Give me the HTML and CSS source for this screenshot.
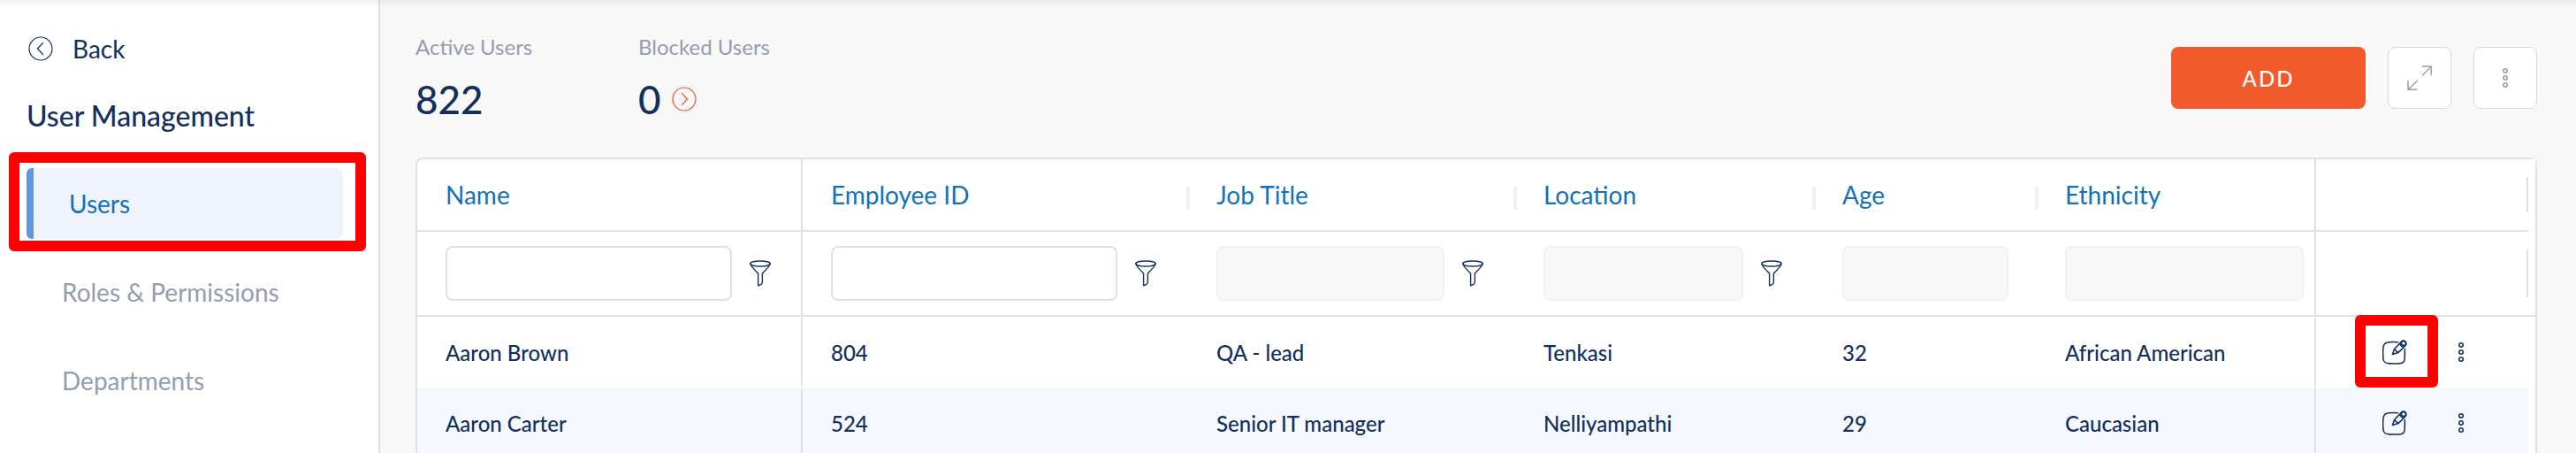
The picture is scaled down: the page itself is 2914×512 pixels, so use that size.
FILE: index.html
```html
<!DOCTYPE html>
<html lang="en">
<head>
    <meta charset="UTF-8">
    <meta name="viewport" content="width=device-width, initial-scale=1.0">
    <title>User Management</title>
    <link rel="stylesheet" href="styles.css">
</head>
<body>

<!-- shared icons -->
<svg class="sprite" aria-hidden="true">
    <symbol id="icon-filter" viewBox="0 0 24 30">
        <ellipse cx="12" cy="4" rx="11.2" ry="3"/>
        <path d="M.8 4C1 6.500 4 9.500 9.600 15v13.800c2.800-.6 4.800-2 4.800-4.200V15C20 9.500 23 6.500 23.200 4"/>
    </symbol>
    <symbol id="icon-edit" viewBox="0 0 28 28">
        <path d="M17.500 2.800C6 2 1 2.500 .8 10c-.3 5-.3 8.500.2 12 .6 4 3 4.700 7 4.900 4 .2 8 .2 12-.1 3.500-.3 5-2 5.200-5.500.2-4 .2-7 .1-10.800"/>
        <path d="M11.500 16.500l2-6L21.300 2.400a3.100 3.100 0 0 1 4.600 4.300L17.800 14.600zM13.500 10.500l4.300 4.100M20 3.800c.2 2.500 1.800 4.200 4.300 4.500"/>
        <circle cx="24" cy="4" r="2.600"/>
    </symbol>
    <symbol id="icon-dots" viewBox="0 0 8 24">
        <circle cx="4" cy="4" r="2.200"/>
        <circle cx="4" cy="12" r="2.200"/>
        <circle cx="4" cy="20" r="2.200"/>
    </symbol>
</svg>

<div class="page">
    <aside class="sidebar">
        <a href="#" class="back">
            <svg class="icon-circle" viewBox="0 0 28 28"><circle cx="14" cy="14" r="13"/><path d="M16.500 7.500L10.500 14l6 6.500"/></svg>
            Back
        </a>
        <h1 class="title">User Management</h1>
        <nav class="menu">
            <a href="#" class="menu-item active">Users<span class="marker marker-menu"></span></a>
            <a href="#" class="menu-item">Roles &amp; Permissions</a>
            <a href="#" class="menu-item">Departments</a>
        </nav>
    </aside>

    <main class="content">
        <header class="toolbar">
            <div class="stat">
                <div class="stat-label">Active Users</div>
                <div class="stat-value">822</div>
            </div>
            <div class="stat">
                <div class="stat-label">Blocked Users</div>
                <div class="stat-value">0
                    <a href="#" class="stat-link" aria-label="Show blocked users">
                        <svg class="icon-circle" viewBox="0 0 28 28"><circle cx="14" cy="14" r="13"/><path d="M11.500 7.500L17.500 14l-6 6.500"/></svg>
                    </a>
                </div>
            </div>
            <div class="actions">
                <button type="button" class="btn-add">ADD</button>
                <button type="button" class="btn-square" aria-label="Expand">
                    <svg class="icon-expand" viewBox="0 0 28 28"><path d="M17.500 11L27 1.500M17.500 1H27.200V10.500M11 17.500L1.500 27M1 17.500V27.200H10.500"/></svg>
                </button>
                <button type="button" class="btn-square" aria-label="More">
                    <svg class="icon-dots"><use href="#icon-dots"/></svg>
                </button>
            </div>
        </header>

        <div class="grid">
            <table>
                <colgroup>
                    <col class="col-name">
                    <col class="col-id">
                    <col class="col-job">
                    <col class="col-location">
                    <col class="col-age">
                    <col>
                    <col class="col-actions">
                    <col class="col-gutter">
                </colgroup>
                <thead>
                    <tr class="heads">
                        <th class="pin-left">Name</th>
                        <th class="resizable">Employee ID</th>
                        <th class="resizable">Job Title</th>
                        <th class="resizable">Location</th>
                        <th class="resizable">Age</th>
                        <th>Ethnicity</th>
                        <th class="pin-right"></th>
                        <th class="gutter"></th>
                    </tr>
                    <tr class="filters">
                        <td class="pin-left"><div class="filter"><input type="text" aria-label="Filter by name"><button type="button" aria-label="Name filter"><svg><use href="#icon-filter"/></svg></button></div></td>
                        <td><div class="filter"><input type="text" aria-label="Filter by employee ID"><button type="button" aria-label="Employee ID filter"><svg><use href="#icon-filter"/></svg></button></div></td>
                        <td><div class="filter"><input type="text" aria-label="Filter by job title" disabled><button type="button" aria-label="Job title filter"><svg><use href="#icon-filter"/></svg></button></div></td>
                        <td><div class="filter"><input type="text" aria-label="Filter by location" disabled><button type="button" aria-label="Location filter"><svg><use href="#icon-filter"/></svg></button></div></td>
                        <td class="plain"><div class="filter"><input type="text" aria-label="Filter by age" disabled></div></td>
                        <td class="last"><div class="filter"><input type="text" aria-label="Filter by ethnicity" disabled></div></td>
                        <td class="pin-right"></td>
                        <td class="gutter"></td>
                    </tr>
                </thead>
                <tbody>
                    <tr>
                        <td class="pin-left">Aaron Brown</td>
                        <td>804</td>
                        <td>QA - lead</td>
                        <td>Tenkasi</td>
                        <td>32</td>
                        <td>African American</td>
                        <td class="pin-right">
                            <div class="row-actions">
                                <button type="button" class="edit" aria-label="Edit Aaron Brown"><svg class="icon-edit"><use href="#icon-edit"/></svg><span class="marker marker-edit"></span></button>
                                <button type="button" aria-label="More for Aaron Brown"><svg class="icon-dots"><use href="#icon-dots"/></svg></button>
                            </div>
                        </td>
                        <td class="gutter"></td>
                    </tr>
                    <tr>
                        <td class="pin-left">Aaron Carter</td>
                        <td>524</td>
                        <td>Senior IT manager</td>
                        <td>Nelliyampathi</td>
                        <td>29</td>
                        <td>Caucasian</td>
                        <td class="pin-right">
                            <div class="row-actions">
                                <button type="button" class="edit" aria-label="Edit Aaron Carter"><svg class="icon-edit"><use href="#icon-edit"/></svg></button>
                                <button type="button" aria-label="More for Aaron Carter"><svg class="icon-dots"><use href="#icon-dots"/></svg></button>
                            </div>
                        </td>
                        <td class="gutter"></td>
                    </tr>
                </tbody>
            </table>
        </div>
    </main>
</div>

</body>
</html>
```
FILE: styles.css
```css
* { box-sizing: border-box; }
body { margin: 0; font-family: Lato, "Open Sans", sans-serif; font-size: 24px; color: #132f5e; background: #f8f8f8; }
a { color: inherit; text-decoration: none; }
button { padding: 0; border: 0; background: none; color: inherit; font-family: inherit; cursor: pointer; }
svg { display: block; fill: none; stroke: currentColor; stroke-width: 1.4; stroke-linecap: round; stroke-linejoin: round; }
.sprite { position: absolute; width: 0; height: 0; }

.page { position: relative; display: flex; height: 100vh; overflow: hidden; }
.page::before { content: ""; position: absolute; top: 0; left: 0; right: 0; height: 8px; background: linear-gradient(rgba(0, 0, 0, 0.06), rgba(0, 0, 0, 0)); z-index: 1; }

/* sidebar */
.sidebar { flex: none; width: 430px; padding: 36px 40px 0 30px; background: #fff; border-right: 2px solid #e1e1e1; }
.back { display: flex; align-items: center; gap: 22px; padding-left: 2px; font-size: 28px; line-height: 38px; }
.icon-circle { width: 28px; height: 28px; stroke-width: 1.2; }
.title { margin: 38px 0 40px; font-size: 32px; font-weight: 500; line-height: 38px; }
.menu { display: flex; flex-direction: column; gap: 20px; }
.menu-item { position: relative; padding-left: 40px; font-size: 28px; line-height: 80px; color: #939db2; }
.menu-item.active { color: #1171bb; background: #eff4fc; border-left: 8px solid #6199d8; border-radius: 6px; }

/* red highlight frames */
.marker { position: absolute; border: 12px solid #f00; border-radius: 6px; pointer-events: none; }
.marker-menu { top: -18px; right: -26px; bottom: -14px; left: -28px; }
.marker-edit { top: -28px; right: -35px; bottom: -26px; left: -31px; }

/* top of the page */
.content { flex: 1; min-width: 0; padding: 37px 44px 0 40px; }
.toolbar { display: flex; align-items: center; margin-bottom: 39px; }
.stat { width: 252px; }
.stat-label { margin-bottom: 16px; line-height: 32px; color: #939db2; }
.stat-value { display: flex; align-items: center; gap: 12px; font-size: 44px; font-weight: 500; line-height: 54px; }
.stat-link { color: #f15b2b; }
.actions { display: flex; gap: 25px; margin-left: auto; }
.btn-add { width: 220px; height: 70px; border-radius: 8px; background: #f15b2b; color: #fff; font-size: 24px; font-weight: 500; letter-spacing: 2px; }
.btn-square { display: flex; align-items: center; justify-content: center; width: 72px; height: 70px; background: #fff; border: 1px solid #d9d9d9; border-radius: 8px; color: #939db2; }
.icon-expand { width: 28px; height: 28px; }
.icon-dots { width: 8px; height: 24px; stroke-width: 1.6; }

/* users table */
.grid { background: #fff; border: 2px solid #e1e1e1; border-radius: 8px; }
table { width: 100%; table-layout: fixed; border-collapse: separate; border-spacing: 0; }
.col-name, .col-id { width: 436px; }
.col-job { width: 370px; }
.col-location { width: 338px; }
.col-age { width: 252px; }
.col-actions { width: 242px; }
.col-gutter { width: 8px; }
th, td { position: relative; padding: 0 32px; text-align: left; white-space: nowrap; }
th { height: 82px; border-bottom: 2px solid #e1e1e1; font-size: 28px; font-weight: 400; color: #1171bb; }
.resizable::after { content: ""; position: absolute; top: 31px; right: -2px; width: 4px; height: 26px; background: #f0f0f0; z-index: 1; }
.pin-left { border-right: 2px solid #e1e1e1; }
.pin-right { border-left: 2px solid #e1e1e1; }
.heads .pin-right::after, .filters .pin-right::after { content: ""; position: absolute; top: 20px; bottom: 20px; right: 0; width: 2px; background: #e1e1e1; }
.heads .gutter { border-bottom: 0; }
.filters td { padding: 16px 36px 16px 32px; border-bottom: 2px solid #e1e1e1; }
.filters .pin-left { padding-right: 34px; }
.filters .plain { padding-right: 32px; }
.filters .last { padding-right: 12px; }
.filter { display: flex; align-items: center; gap: 20px; }
.filter input { flex: 1; min-width: 0; height: 62px; padding: 0 16px; border: 2px solid #e1e1e1; border-radius: 8px; background: #fff; font: inherit; color: inherit; }
.filter input:disabled { background: #f9f9f9; border-color: #f2f2f2; }
.filter svg { width: 24px; height: 30px; }
tbody td { height: 80px; font-weight: 500; }
tbody tr:nth-child(even) td { background: #f5f9fe; }
tbody .pin-left, tbody .pin-right { border-top: 2px solid transparent; border-bottom: 2px solid transparent; }
.row-actions { display: flex; align-items: center; gap: 57px; padding-left: 43px; }
.edit { position: relative; }
.icon-edit { width: 28px; height: 28px; stroke-width: 1.6; }
tbody tr:nth-child(even) td.gutter, td.gutter, th.gutter { padding: 0; background: #fff; }
```
